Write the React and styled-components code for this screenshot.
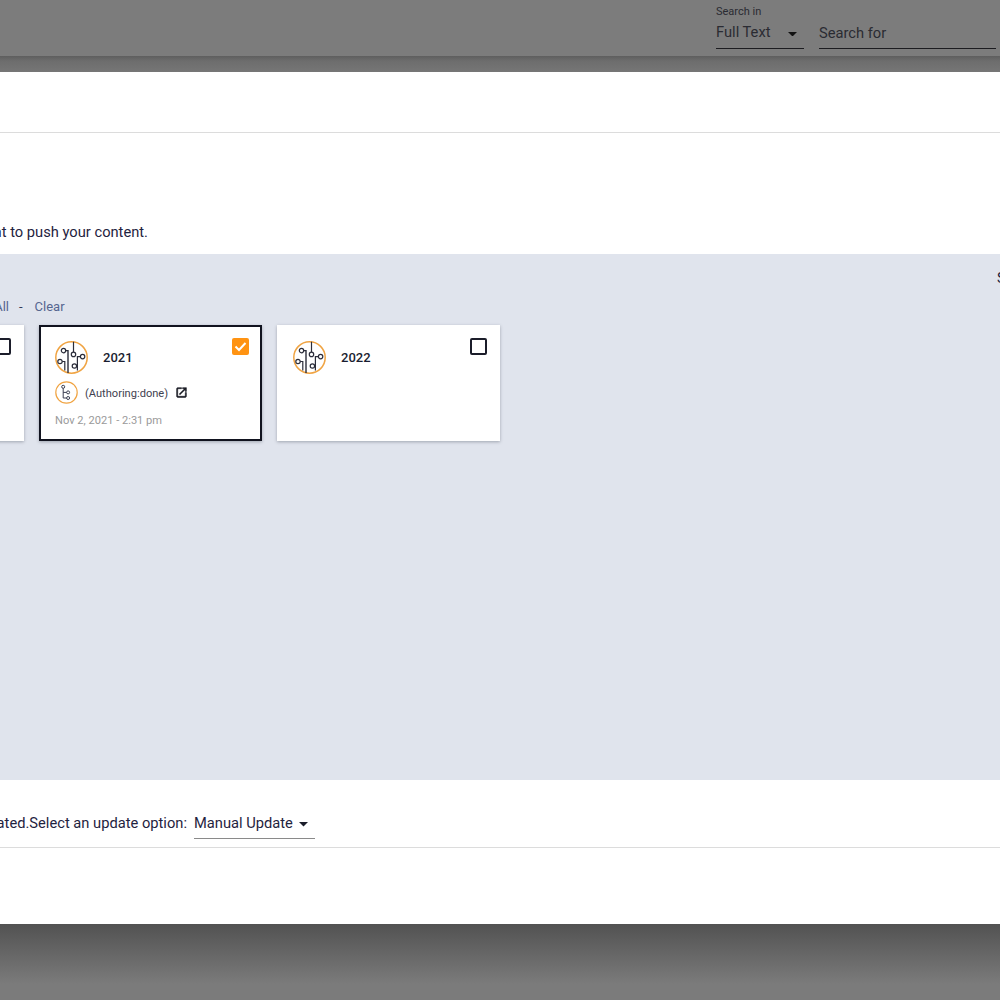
import React from 'react'
import styled, { createGlobalStyle } from 'styled-components'

const GlobalStyle = createGlobalStyle`
  html, body {
    margin: 0;
    padding: 0;
    background: #7b7b7b;
    font-family: Roboto, "Liberation Sans", sans-serif;
  }
`

const CircuitIcon = () => (
  <CircuitSvg viewBox="0 0 33 33">
    <circle cx="16.5" cy="16.5" r="15.7" fill="none" stroke="#f0a443" strokeWidth="1.5" />
    <g fill="none" stroke="#2b2d3a" strokeWidth="1.2">
      <path d="M18.5 0.7V11.2" />
      <circle cx="18.5" cy="13.4" r="2.2" />
      <circle cx="8.5" cy="9.6" r="2.2" />
      <path d="M10.7 9.6H13V32" strokeWidth="1.4" />
      <circle cx="5" cy="20.5" r="2.2" />
      <path d="M7.2 20.5H9.8V29.5" />
      <circle cx="27.6" cy="15.6" r="2.2" />
      <path d="M25.4 15.6H22.4V29.5" />
      <circle cx="19.4" cy="25" r="2.2" />
      <path d="M21.6 25H22.4" />
    </g>
  </CircuitSvg>
)

const BranchIcon = () => (
  <BranchSvg viewBox="0 0 23 23">
    <circle cx="11.5" cy="11.5" r="10.7" fill="none" stroke="#f0a443" strokeWidth="1.2" />
    <g fill="none" stroke="#3a3f52" strokeWidth="1">
      <circle cx="8.2" cy="5.8" r="1.5" />
      <path d="M8.2 7.3V17H11.6" />
      <path d="M8.2 11.4H11.6" />
      <circle cx="13.1" cy="11.4" r="1.5" />
      <circle cx="13.1" cy="17" r="1.5" />
    </g>
  </BranchSvg>
)

const OpenIcon = () => (
  <OpenSvg viewBox="0 0 24 24">
    <path
      fill="#14161f"
      stroke="#14161f"
      strokeWidth="1"
      d="M19 19H5V5h7V3H5c-1.11 0-2 .9-2 2v14c0 1.1.89 2 2 2h14c1.1 0 2-.9 2-2v-7h-2v7zM14 3v2h3.59l-9.83 9.83 1.41 1.41L19 6.41V10h2V3h-7z"
    />
  </OpenSvg>
)

const Caret = ({ dim }) => (
  <CaretSvg viewBox="0 0 10 5">
    <path d="M0 0H10L5 5Z" fill={dim ? '#121212' : '#1b1d2a'} />
  </CaretSvg>
)

const Checkbox = ({ checked }) =>
  checked ? (
    <CheckOn>
      <svg width="13" height="11" viewBox="0 0 13 11">
        <path d="M1.5 5.5L5 9L11.5 2" fill="none" stroke="#fff" strokeWidth="2" />
      </svg>
    </CheckOn>
  ) : (
    <CheckOff />
  )

const Card = ({ title, selected, branch, date }) => (
  <CardBox $selected={selected}>
    <CardHead>
      <CircuitIcon />
      <CardTitle>{title}</CardTitle>
      <Checkbox checked={selected} />
    </CardHead>
    {branch && (
      <BranchRow>
        <BranchIcon />
        <BranchText>{branch}</BranchText>
        <OpenIcon />
      </BranchRow>
    )}
    {date && <DateText>{date}</DateText>}
  </CardBox>
)

export default function App() {
  return (
    <Page>
      <GlobalStyle />
      <TopBar>
        <SearchIn>
          <SmallLabel>Search in</SmallLabel>
          <SelectValue>
            Full Text
            <Caret dim />
          </SelectValue>
        </SearchIn>
        <SearchFor>Search for</SearchFor>
      </TopBar>
      <TopShade />
      <Modal>
        <ModalTitle />
        <Intro>
          <ClippedLeft $width={148}>Select the environment where you want to push your content.</ClippedLeft>
        </Intro>
        <Panel>
          <PanelTop>Select</PanelTop>
          <LinksRow>
            <ClippedLeft $width={9}>
              <LinkText>Select All</LinkText>
            </ClippedLeft>
            <Dash>-</Dash>
            <LinkText>Clear</LinkText>
          </LinksRow>
          <CardsRow>
            <Card title="2020" />
            <Card
              title="2021"
              selected
              branch="(Authoring:done)"
              date="Nov 2, 2021 - 2:31 pm"
            />
            <Card title="2022" />
          </CardsRow>
        </Panel>
        <FooterRow>
          <ClippedLeft $width={187}>Content will be updated.Select an update option:</ClippedLeft>
          <UpdateSelect>
            Manual Update
            <Caret />
          </UpdateSelect>
        </FooterRow>
      </Modal>
      <BottomShade />
    </Page>
  )
}

const Page = styled.div`
  width: 1000px;
  height: 1000px;
  overflow: hidden;
  display: flex;
  flex-direction: column;
  background: #7b7b7b;
  color: #1f2340;
`
const TopBar = styled.div`
  height: 56px;
  flex: none;
  box-sizing: border-box;
  display: flex;
  align-items: flex-end;
  padding: 0 4px 7px 716px;
  gap: 15px;
  background: #7c7c7c;
  color: #2a2b32;
`
const TopShade = styled.div`
  height: 16px;
  flex: none;
  background: linear-gradient(to bottom, #5e5e5e, #6d6d6d 5px, #767676);
`
const BottomShade = styled.div`
  flex: 1;
  background: linear-gradient(to bottom, #525252, #7b7b7b 60px);
`
const SearchIn = styled.div`
  width: 88px;
  flex: none;
`
const SmallLabel = styled.div`
  font-size: 11px;
  line-height: 13px;
  margin-bottom: 7px;
`
const SelectValue = styled.div`
  display: flex;
  align-items: center;
  justify-content: space-between;
  box-sizing: border-box;
  height: 24px;
  font-size: 14.7px;
  padding: 0 7px 9px 0;
  border-bottom: 1px solid #1c1c20;
`
const SearchFor = styled.div`
  flex: 1;
  box-sizing: border-box;
  height: 24px;
  font-size: 14.7px;
  line-height: 17px;
  border-bottom: 1px solid #1c1c20;
`
const CaretSvg = styled.svg`
  width: 9px;
  height: 4.5px;
  flex: none;
  margin-top: 4px;
`
const Modal = styled.div`
  height: 852px;
  flex: none;
  background: #fff;
  display: flex;
  flex-direction: column;
`
const ModalTitle = styled.div`
  height: 60px;
  flex: none;
  border-bottom: 1px solid #dcdcdc;
`
const Intro = styled.div`
  height: 121px;
  flex: none;
  box-sizing: border-box;
  display: flex;
  align-items: flex-end;
  padding-bottom: 13px;
  font-size: 14.7px;
  line-height: 17px;
`
const ClippedLeft = styled.div`
  width: ${(p) => p.$width}px;
  flex: none;
  display: flex;
  justify-content: flex-end;
  white-space: nowrap;
`
const Panel = styled.div`
  height: 526px;
  flex: none;
  background: #e0e4ed;
  display: flex;
  flex-direction: column;
`
const PanelTop = styled.div`
  margin: 16px 0 0 997px;
  font-size: 14.7px;
  line-height: 17px;
  white-space: nowrap;
  height: 17px;
`
const LinksRow = styled.div`
  display: flex;
  align-items: center;
  margin-top: 11px;
  height: 16px;
  font-size: 13px;
  color: #4d5f8c;
`
const LinkText = styled.span`
  color: #566690;
`
const Dash = styled.span`
  margin: 0 12px 0 10px;
  color: #333a55;
`
const CardsRow = styled.div`
  display: flex;
  gap: 15px;
  margin: 11px 0 0 -199px;
`
const CardBox = styled.div`
  width: 223px;
  height: 116px;
  flex: none;
  box-sizing: border-box;
  background: #fff;
  box-shadow: 0 1px 3px rgba(40, 45, 60, 0.35);
  border: 2px solid ${(p) => (p.$selected ? '#11131f' : 'transparent')};
  padding: 14px 11px 0 14px;
  display: flex;
  flex-direction: column;
`
const CardHead = styled.div`
  display: flex;
  align-items: flex-start;
  height: 33px;
`
const CircuitSvg = styled.svg`
  width: 33px;
  height: 33px;
  flex: none;
  display: block;
`
const CardTitle = styled.div`
  flex: 1;
  margin-left: 15px;
  font-size: 13px;
  font-weight: 500;
  line-height: 33px;
  color: #1a1d30;
`
const CheckOn = styled.div`
  width: 17px;
  height: 17px;
  margin-top: -3px;
  flex: none;
  border-radius: 2px;
  background: #ff9312;
  display: flex;
  align-items: center;
  justify-content: center;
`
const CheckOff = styled.div`
  width: 17px;
  height: 17px;
  margin-top: -3px;
  flex: none;
  box-sizing: border-box;
  border: 2px solid #1b1d2a;
  border-radius: 2px;
`
const BranchRow = styled.div`
  display: flex;
  align-items: center;
  margin-top: 7px;
  height: 23px;
`
const BranchSvg = styled.svg`
  width: 23px;
  height: 23px;
  flex: none;
`
const BranchText = styled.span`
  margin-left: 7px;
  padding-top: 1px;
  font-size: 11.1px;
  color: #3f4250;
`
const OpenSvg = styled.svg`
  width: 13px;
  height: 13px;
  margin-left: 7px;
  flex: none;
`
const DateText = styled.div`
  margin-top: 10px;
  font-size: 11.1px;
  line-height: 14px;
  color: #9a9a9a;
`
const FooterRow = styled.div`
  height: 68px;
  flex: none;
  box-sizing: border-box;
  display: flex;
  align-items: flex-start;
  gap: 7px;
  padding-top: 34px;
  border-bottom: 1px solid #dcdcdc;
  font-size: 14.7px;
  line-height: 18px;
`
const UpdateSelect = styled.div`
  width: 121px;
  height: 25px;
  flex: none;
  box-sizing: border-box;
  display: flex;
  align-items: flex-start;
  gap: 6px;
  border-bottom: 1px solid #8a8a8a;
  & > svg {
    margin-top: 8px;
  }
`
